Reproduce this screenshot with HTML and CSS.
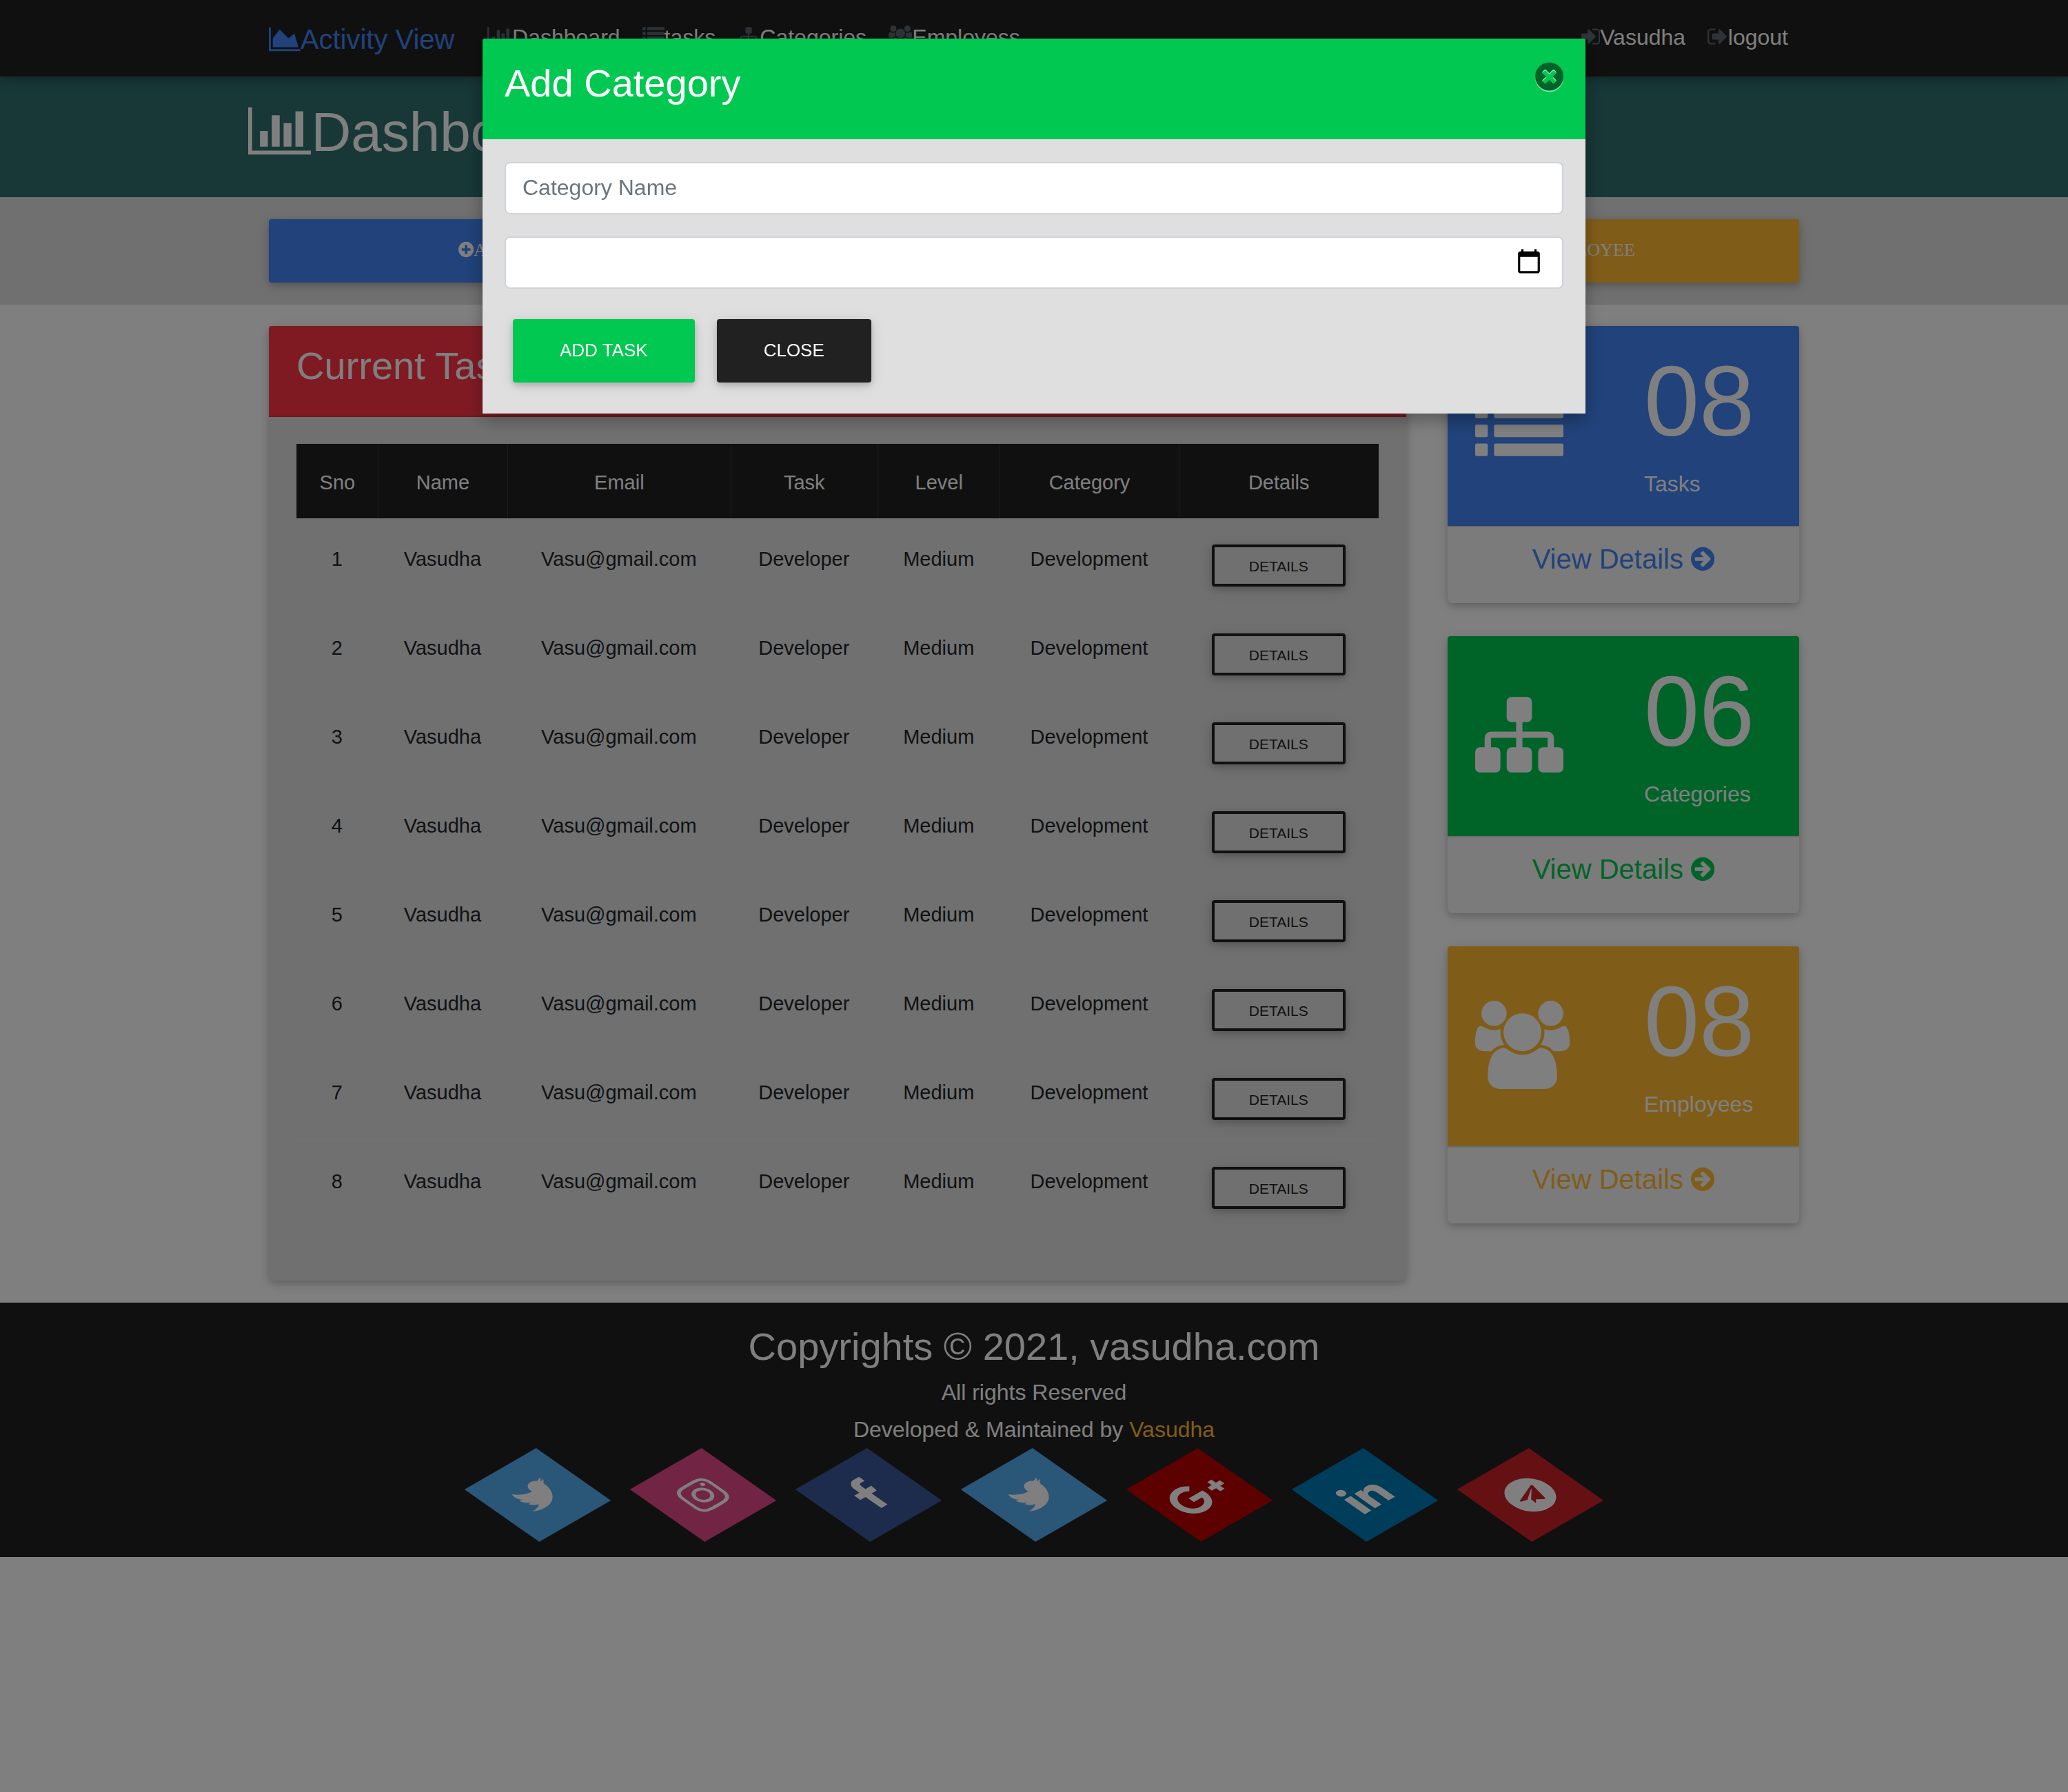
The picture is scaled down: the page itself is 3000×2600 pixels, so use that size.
FILE: index.html
```html
<!DOCTYPE html>
<html lang="en">
<head>
<meta charset="utf-8">
<meta name="viewport" content="width=device-width, initial-scale=1">
<title>Activity View</title>
<link rel="stylesheet" href="styles.css">
</head>
<body>
<svg class="sprite" aria-hidden="true">
  <symbol id="area-chart" viewBox="0 0 2048 1792"><path d="M2048 1536v128h-2048v-1536h128v1408h1920zm-384-1024l256 896h-1664v-576l448-576 576 576z"/></symbol>
  <symbol id="bar-chart" viewBox="0 0 2048 1792"><path d="M640 896v512h-256v-512h256zm384-512v1024h-256v-1024h256zm1024 1152v128h-2048v-1536h128v1408h1920zm-640-896v768h-256v-768h256zm384-384v1152h-256v-1152h256z"/></symbol>
  <symbol id="list" viewBox="0 0 1792 1792"><rect x="0" y="128" width="256" height="256" rx="32"/><rect x="384" y="128" width="1408" height="256" rx="32"/><rect x="0" y="512" width="256" height="256" rx="32"/><rect x="384" y="512" width="1408" height="256" rx="32"/><rect x="0" y="896" width="256" height="256" rx="32"/><rect x="384" y="896" width="1408" height="256" rx="32"/><rect x="0" y="1280" width="256" height="256" rx="32"/><rect x="384" y="1280" width="1408" height="256" rx="32"/></symbol>
  <symbol id="sitemap" viewBox="0 0 1792 1792"><path d="M1792 1248v320q0 40-28 68t-68 28h-320q-40 0-68-28t-28-68v-320q0-40 28-68t68-28h96v-192h-512v192h96q40 0 68 28t28 68v320q0 40-28 68t-68 28h-320q-40 0-68-28t-28-68v-320q0-40 28-68t68-28h96v-192h-512v192h96q40 0 68 28t28 68v320q0 40-28 68t-68 28h-320q-40 0-68-28t-28-68v-320q0-40 28-68t68-28h96v-192q0-52 38-90t90-38h512v-192h-96q-40 0-68-28t-28-68v-320q0-40 28-68t68-28h320q40 0 68 28t28 68v320q0 40-28 68t-68 28h-96v192h512q52 0 90 38t38 90v192h96q40 0 68 28t28 68z"/></symbol>
  <symbol id="users" viewBox="0 0 1920 1792"><path d="M593 896q-162 5-265 128h-134q-82 0-138-40.5t-56-118.5q0-353 124-353 6 0 43.5 21t97.5 42.5 119 21.5q67 0 133-23-5 37-5 66 0 139 81 256zm1071 637q0 120-73 189.5t-194 69.5h-874q-121 0-194-69.5t-73-189.5q0-53 3.5-103.5t14-109 26.5-108.5 43-97.5 62-81 85.5-53.5 111.5-20q10 0 43 21.5t73 48 107 48 135 21.5 135-21.5 107-48 73-48 43-21.5q61 0 111.5 20t85.5 53.5 62 81 43 97.5 26.5 108.5 14 109 3.5 103.5zm-1024-1277q0 106-75 181t-181 75-181-75-75-181 75-181 181-75 181 75 75 181zm704 384q0 159-112.5 271.5t-271.5 112.5-271.5-112.5-112.5-271.5 112.5-271.5 271.5-112.5 271.5 112.5 112.5 271.5zm576 225q0 78-56 118.5t-138 40.5h-134q-103-123-265-128 81-117 81-256 0-29-5-66 66 23 133 23 59 0 119-21.5t97.5-42.5 43.5-21q124 0 124 353zm-128-609q0 106-75 181t-181 75-181-75-75-181 75-181 181-75 181 75 75 181z"/></symbol>
  <symbol id="sign-in" viewBox="128 0 1536 1792"><path d="M1312 896q0 26-19 45l-544 544q-19 19-45 19t-45-19-19-45v-288h-448q-26 0-45-19t-19-45v-384q0-26 19-45t45-19h448v-288q0-26 19-45t45-19 45 19l544 544q19 19 19 45zm352-352v704q0 119-84.5 203.5t-203.5 84.5h-320q-13 0-22.5-9.5t-9.5-22.5q0-4-1-20t-.5-26.5 3-23.5 10-19.5 20.5-6.5h320q66 0 113-47t47-113v-704q0-66-47-113t-113-47h-312l-11.5-1-11.5-3-8-5.5-7-9-2-13.5q0-4-1-20t-.5-26.5 3-23.5 10-19.5 20.5-6.5h320q119 0 203.5 84.5t84.5 203.5z"/></symbol>
  <symbol id="sign-out" viewBox="64 0 1664 1792"><path d="M704 1440q0 4 1 20t.5 26.5-3 23.5-10 19.5-20.5 6.5h-320q-119 0-203.5-84.5t-84.5-203.5v-704q0-119 84.5-203.5t203.5-84.5h320q13 0 22.5 9.5t9.5 22.5q0 4 1 20t.5 26.5-3 23.5-10 19.5-20.5 6.5h-320q-66 0-113 47t-47 113v704q0 66 47 113t113 47h312l11.5 1 11.5 3 8 5.5 7 9 2 13.5zm928-544q0 26-19 45l-544 544q-19 19-45 19t-45-19-19-45v-288h-448q-26 0-45-19t-19-45v-384q0-26 19-45t45-19h448v-288q0-26 19-45t45-19 45 19l544 544q19 19 19 45z"/></symbol>
  <symbol id="plus-circle" viewBox="128 0 1536 1792"><path d="M1344 960v-128q0-26-19-45t-45-19h-256v-256q0-26-19-45t-45-19h-128q-26 0-45 19t-19 45v256h-256q-26 0-45 19t-19 45v128q0 26 19 45t45 19h256v256q0 26 19 45t45 19h128q26 0 45-19t19-45v-256h256q26 0 45-19t19-45zm320-64q0 209-103 385.5t-279.5 279.5-385.5 103-385.5-103-279.5-279.5-103-385.5 103-385.5 279.5-279.5 385.5-103 385.5 103 279.5 279.5 103 385.5z"/></symbol>
  <symbol id="arrow-circle" viewBox="128 0 1536 1792"><path d="M1413 896q0-27-18-45l-91-91-362-362q-18-18-45-18t-45 18l-91 91q-18 18-18 45t18 45l189 189h-502q-26 0-45 19t-19 45v128q0 26 19 45t45 19h502l-189 189q-19 19-19 45t19 45l91 91q18 18 45 18t45-18l362-362 91-91q18-18 18-45zm251 0q0 209-103 385.5t-279.5 279.5-385.5 103-385.5-103-279.5-279.5-103-385.5 103-385.5 279.5-279.5 385.5-103 385.5 103 279.5 279.5 103 385.5z"/></symbol>
  <symbol id="times-circle" viewBox="128 0 1536 1792"><path d="M1277 1122q0-26-19-45l-181-181 181-181q19-19 19-45 0-27-19-46l-90-90q-19-19-46-19-26 0-45 19l-181 181-181-181q-19-19-45-19-27 0-46 19l-90 90q-19 19-19 46 0 26 19 45l181 181-181 181q-19 19-19 45 0 27 19 46l90 90q19 19 46 19 26 0 45-19l181-181 181 181q19 19 45 19 27 0 46-19l90-90q19-19 19-46zm387-226q0 209-103 385.5t-279.5 279.5-385.5 103-385.5-103-279.5-279.5-103-385.5 103-385.5 279.5-279.5 385.5-103 385.5 103 279.5 279.5 103 385.5z"/></symbol>
  <symbol id="twitter" viewBox="64 0 1664 1792"><path d="M1684 408q-67 98-162 167 1 14 1 42 0 130-38 259.5t-115.5 248.5-184.5 210.5-258 146-323 54.5q-271 0-496-145 35 4 78 4 225 0 401-138-105-2-188-64.5t-114-159.5q33 5 61 5 43 0 85-11-112-23-185.5-111.5t-73.5-205.5v-4q68 38 146 41-66-44-105-115t-39-154q0-88 44-163 121 149 294.5 238.5t371.5 99.5q-8-38-8-74 0-134 94.5-228.5t228.5-94.5q140 0 236 102 109-21 205-78-37 115-142 178 93-10 186-50z"/></symbol>
  <symbol id="instagram" viewBox="128 0 1536 1792"><path d="M1152 896q0-106-75-181t-181-75-181 75-75 181 75 181 181 75 181-75 75-181zm138 0q0 164-115 279t-279 115-279-115-115-279 115-279 279-115 279 115 115 279zm108-410q0 38-27 65t-65 27-65-27-27-65 27-65 65-27 65 27 27 65zm-502-220q-7 0-76.5-.5t-105.5 0-96.5 3-103 10-71.5 18.5q-50 20-88 58t-58 88q-11 29-18.5 71.5t-10 103-3 96.5 0 105.5.5 76.5-.5 76.5 0 105.5 3 96.5 10 103 18.5 71.5q20 50 58 88t88 58q29 11 71.5 18.5t103 10 96.5 3 105.5 0 76.5-.5 76.5.5 105.5 0 96.5-3 103-10 71.5-18.5q50-20 88-58t58-88q11-29 18.5-71.5t10-103 3-96.5 0-105.5-.5-76.5.5-76.5 0-105.5-3-96.5-10-103-18.5-71.5q-20-50-58-88t-88-58q-29-11-71.5-18.5t-103-10-96.5-3-105.5 0-76.5.5zm768 630q0 229-5 317-10 208-124 322t-322 124q-88 5-317 5t-317-5q-208-10-322-124t-124-322q-5-88-5-317t5-317q10-208 124-322t322-124q88-5 317-5t317 5q208 10 322 124t124 322q5 88 5 317z"/></symbol>
  <symbol id="facebook" viewBox="384 0 1024 1792"><path d="M1343 12v264h-157q-86 0-116 36t-30 108v189h293l-39 296h-254v759h-306v-759h-255v-296h255v-218q0-186 104-288.5t277-102.5q147 0 228 12z"/></symbol>
  <symbol id="google-plus" viewBox="0 0 2304 1792"><path d="M1437 913q0 208-87 370.5t-248 254-369 91.5q-149 0-285-58t-234-156-156-234-58-285 58-285 156-234 234-156 285-58q286 0 491 192l-199 191q-117-113-292-113-123 0-227.5 62t-165.5 168.5-61 232.5 61 232.5 165.5 168.5 227.5 62q83 0 152.5-23t114.5-57.5 78.5-78.5 49-83 21.5-74h-416v-252h692q12 63 12 122zm867-122v210h-209v209h-210v-209h-209v-210h209v-209h210v209h209z"/></symbol>
  <symbol id="linkedin" viewBox="128 0 1536 1792"><path d="M477 625v991h-330v-991h330zm21-306q1 73-50.5 122t-135.5 49h-2q-82 0-132-49t-50-122q0-74 51.5-122.5t134.5-48.5 133 48.5 51 122.5zm1166 729v568h-329v-530q0-105-40.5-164.5t-126.5-59.5q-63 0-105.5 34.5t-63.5 85.5q-11 30-11 81v553h-329q2-399 2-647t-1-296l-1-48h329v144h-2q20-32 41-56t56.5-52 87-43.5 114.5-15.5q171 0 275 113.5t104 332.5z"/></symbol>
  <symbol id="telegram" viewBox="0 0 1792 1792"><path d="M1189 1307l147-693q9-44-10.5-63t-51.5-7l-864 333q-29 11-39.5 25t-2.5 26.5 32 19.5l221 69 513-323q21-14 32-6 7 5-4 15l-415 375-16 228q23 0 45-22l108-104 224 165q64 36 81-38zm603-411q0 182-71 348t-191 286-286 191-348 71-348-71-286-191-191-286-71-348 71-348 191-286 286-191 348-71 348 71 286 191 191 286 71 348z"/></symbol>
</svg>

<nav class="navbar">
  <div class="container navbar-inner">
    <a class="brand" href="#"><svg class="icon icon-chart"><use href="#area-chart"/></svg>Activity View</a>
    <ul class="nav-list">
      <li><a class="nav-link" href="#"><svg class="icon icon-chart"><use href="#bar-chart"/></svg>Dashboard</a></li>
      <li><a class="nav-link" href="#"><svg class="icon"><use href="#list"/></svg>tasks</a></li>
      <li><a class="nav-link" href="#"><svg class="icon"><use href="#sitemap"/></svg>Categories</a></li>
      <li><a class="nav-link" href="#"><svg class="icon icon-users"><use href="#users"/></svg>Employess</a></li>
    </ul>
    <ul class="nav-list nav-end">
      <li><a class="nav-link" href="#"><svg class="icon icon-round"><use href="#sign-in"/></svg>Vasudha</a></li>
      <li><a class="nav-link" href="#"><svg class="icon icon-exit"><use href="#sign-out"/></svg>logout</a></li>
    </ul>
  </div>
</nav>

<header class="page-header">
  <div class="heading-row">
    <h1 class="page-title"><svg class="icon icon-chart"><use href="#bar-chart"/></svg>Dashboard</h1>
  </div>
</header>

<section class="actions">
  <div class="container action-grid">
    <button class="btn btn-serif btn-primary" type="button"><svg class="icon icon-round"><use href="#plus-circle"/></svg>ADD TASK</button>
    <button class="btn btn-serif btn-success" type="button"><svg class="icon icon-round"><use href="#plus-circle"/></svg>ADD CATEGORY</button>
    <button class="btn btn-serif btn-warning" type="button"><svg class="icon icon-round"><use href="#plus-circle"/></svg>ADD EMPLOYEE</button>
  </div>
</section>

<main class="container main-grid">
  <section class="card">
    <h2 class="card-title">Current Tasks</h2>
    <div class="card-body">
      <table class="tasks">
        <colgroup><col class="c-sno"><col class="c-name"><col class="c-email"><col class="c-task"><col class="c-level"><col class="c-category"><col></colgroup>
        <thead>
          <tr><th scope="col">Sno</th><th scope="col">Name</th><th scope="col">Email</th><th scope="col">Task</th><th scope="col">Level</th><th scope="col">Category</th><th scope="col">Details</th></tr>
        </thead>
        <tbody>
          <tr><td>1</td><td>Vasudha</td><td>Vasu@gmail.com</td><td>Developer</td><td>Medium</td><td>Development</td><td><button class="btn-outline" type="button">DETAILS</button></td></tr>
          <tr><td>2</td><td>Vasudha</td><td>Vasu@gmail.com</td><td>Developer</td><td>Medium</td><td>Development</td><td><button class="btn-outline" type="button">DETAILS</button></td></tr>
          <tr><td>3</td><td>Vasudha</td><td>Vasu@gmail.com</td><td>Developer</td><td>Medium</td><td>Development</td><td><button class="btn-outline" type="button">DETAILS</button></td></tr>
          <tr><td>4</td><td>Vasudha</td><td>Vasu@gmail.com</td><td>Developer</td><td>Medium</td><td>Development</td><td><button class="btn-outline" type="button">DETAILS</button></td></tr>
          <tr><td>5</td><td>Vasudha</td><td>Vasu@gmail.com</td><td>Developer</td><td>Medium</td><td>Development</td><td><button class="btn-outline" type="button">DETAILS</button></td></tr>
          <tr><td>6</td><td>Vasudha</td><td>Vasu@gmail.com</td><td>Developer</td><td>Medium</td><td>Development</td><td><button class="btn-outline" type="button">DETAILS</button></td></tr>
          <tr><td>7</td><td>Vasudha</td><td>Vasu@gmail.com</td><td>Developer</td><td>Medium</td><td>Development</td><td><button class="btn-outline" type="button">DETAILS</button></td></tr>
          <tr><td>8</td><td>Vasudha</td><td>Vasu@gmail.com</td><td>Developer</td><td>Medium</td><td>Development</td><td><button class="btn-outline" type="button">DETAILS</button></td></tr>
        </tbody>
      </table>
    </div>
  </section>

  <aside class="stats">
    <section class="stat stat-primary">
      <div class="stat-body">
        <svg class="icon stat-icon"><use href="#list"/></svg>
        <div><p class="stat-number">08</p><p class="stat-label">Tasks</p></div>
      </div>
      <div class="stat-footer"><a class="stat-link" href="#">View Details <svg class="icon icon-round"><use href="#arrow-circle"/></svg></a></div>
    </section>
    <section class="stat stat-success">
      <div class="stat-body">
        <svg class="icon stat-icon"><use href="#sitemap"/></svg>
        <div><p class="stat-number">06</p><p class="stat-label">Categories</p></div>
      </div>
      <div class="stat-footer"><a class="stat-link" href="#">View Details <svg class="icon icon-round"><use href="#arrow-circle"/></svg></a></div>
    </section>
    <section class="stat stat-warning">
      <div class="stat-body">
        <svg class="icon icon-users stat-icon"><use href="#users"/></svg>
        <div><p class="stat-number">08</p><p class="stat-label">Employees</p></div>
      </div>
      <div class="stat-footer"><a class="stat-link" href="#">View Details <svg class="icon icon-round"><use href="#arrow-circle"/></svg></a></div>
    </section>
  </aside>
</main>

<footer class="footer">
  <h2 class="footer-title">Copyrights © 2021, vasudha.com</h2>
  <p class="footer-line">All rights Reserved</p>
  <p class="footer-line">Developed &amp; Maintained by <a class="footer-link" href="#">Vasudha</a></p>
  <ul class="social">
    <li><a class="social-link twitter" href="#" aria-label="Twitter"><svg class="icon icon-exit"><use href="#twitter"/></svg></a></li>
    <li><a class="social-link instagram" href="#" aria-label="Instagram"><svg class="icon icon-round"><use href="#instagram"/></svg></a></li>
    <li><a class="social-link facebook" href="#" aria-label="Facebook"><svg class="icon"><use href="#facebook"/></svg></a></li>
    <li><a class="social-link twitter" href="#" aria-label="Twitter"><svg class="icon icon-exit"><use href="#twitter"/></svg></a></li>
    <li><a class="social-link google" href="#" aria-label="Google Plus"><svg class="icon icon-google"><use href="#google-plus"/></svg></a></li>
    <li><a class="social-link linkedin" href="#" aria-label="LinkedIn"><svg class="icon icon-round"><use href="#linkedin"/></svg></a></li>
    <li><a class="social-link telegram" href="#" aria-label="Telegram"><svg class="icon"><use href="#telegram"/></svg></a></li>
  </ul>
</footer>

<div class="backdrop">
  <div class="modal" role="dialog" aria-modal="true" aria-labelledby="modal-title">
    <div class="modal-header">
      <h3 class="modal-title" id="modal-title">Add Category</h3>
      <button class="modal-close" type="button" aria-label="Close"><svg class="icon icon-round"><use href="#times-circle"/></svg></button>
    </div>
    <form class="modal-body">
      <input class="field" type="text" placeholder="Category Name" aria-label="Category Name">
      <input class="field field-date" type="date" aria-label="Date">
      <div class="modal-actions">
        <button class="btn btn-success" type="button">ADD TASK</button>
        <button class="btn btn-dark" type="button">CLOSE</button>
      </div>
    </form>
  </div>
</div>
</body>
</html>
```

FILE: styles.css
```css
* { box-sizing: border-box; }

:root {
  --primary: #4285f4;
  --success: #00c851;
  --warning: #ffbb33;
  --danger: #ff3547;
  --dark: #212121;
  --grey: #e0e0e0;
  --raised: 0 4px 10px rgba(0, 0, 0, .16), 0 4px 20px rgba(0, 0, 0, .12);
}

body {
  margin: 0;
  background: #fff;
  color: #212529;
  font-family: "Liberation Sans", Arial, sans-serif;
  font-size: 32px;
  line-height: 48px;
}

h1, h2, h3, p, ul { margin: 0; padding: 0; font-weight: 400; }
ul { list-style: none; }
a { text-decoration: none; }
button, input { font-family: inherit; }

.sprite { display: none; }

/* Icons share one em box; the variants only widen it. */
.icon {
  display: inline-block;
  width: 1em;
  height: 1em;
  fill: currentColor;
  vertical-align: -.143em;
}
.icon-chart { width: 1.143em; }
.icon-users { width: 1.071em; }
.icon-round { width: .857em; }
.icon-exit { width: .929em; }
.icon-google { width: 1.286em; }

.container {
  width: 100%;
  max-width: 2280px;
  margin: 0 auto;
  padding: 0 30px;
}

/* Navbar */
.navbar {
  position: relative;
  background: var(--dark);
  box-shadow: var(--raised);
  padding: 16px 0;
}
.navbar-inner { display: flex; align-items: center; }
.brand {
  margin-right: 31px;
  padding: 12px 0 8px;
  color: var(--primary);
  font-size: 40px;
  line-height: 59px;
}
.nav-list { display: flex; }
.nav-end { margin-left: auto; }
.nav-link {
  display: block;
  padding: 0 16px 4px;
  color: #fff;
}
.nav-link .icon { color: #5c666f; }

/* Page heading */
.page-header { background: #306e6e; padding: 33px 0 46px; }
.heading-row { max-width: 2280px; margin: 0 auto; }
.page-title { color: #fff; font-size: 80px; line-height: 96px; }

/* Buttons */
.btn {
  padding: 26px 68px 28px;
  border: 0;
  border-radius: 4px;
  color: #fff;
  font-size: 26px;
  line-height: 38px;
  box-shadow: var(--raised);
}
.btn-serif { font-family: "Liberation Serif", "Times New Roman", serif; }
.btn-primary { background: var(--primary); }
.btn-success { background: var(--success); }
.btn-warning { background: var(--warning); }
.btn-dark { background: var(--dark); }

.actions { background: var(--grey); padding: 32px 0; }
.action-grid { display: grid; grid-template-columns: repeat(3, 1fr); gap: 60px; }

/* Main */
.main-grid {
  display: grid;
  grid-template-columns: 1fr 510px;
  gap: 60px;
  align-items: start;
  padding-top: 31px;
  padding-bottom: 32px;
}
.card {
  overflow: hidden;
  background: var(--grey);
}
.card, .stat { border-radius: 4px 4px 8px 8px; box-shadow: var(--raised); }
.card-title {
  padding: 24px 40px 39px;
  border-bottom: 2px solid rgba(0, 0, 0, .125);
  background: var(--danger);
  color: #fff;
  font-size: 56px;
  line-height: 67px;
}
.card-body { padding: 39px 40px 74px; }

.tasks {
  width: 100%;
  table-layout: fixed;
  border-collapse: separate;
  border-spacing: 0;
  font-size: 29px;
  line-height: 43px;
  text-align: center;
}
.c-sno { width: 7.5%; }
.c-name { width: 12%; }
.c-email { width: 20.6%; }
.c-task { width: 13.6%; }
.c-level { width: 11.3%; }
.c-category { width: 16.5%; }
.tasks th {
  padding: 35px 0 30px;
  border-left: 1px solid #32383e;
  background: var(--dark);
  color: #fff;
  font-weight: 400;
}
.tasks td {
  padding: 38px 0 28px;
  border-bottom: 2px solid #dee2e6;
  vertical-align: top;
}
.btn-outline {
  display: block;
  margin: 0 auto;
  padding: 12px 50px 10px;
  border: 4px solid var(--dark);
  border-radius: 4px;
  background: transparent;
  color: var(--dark);
  font-size: 21px;
  line-height: 31px;
  box-shadow: var(--raised);
}

/* Stat cards */
.stats { display: grid; gap: 48px; }
.stat { overflow: hidden; background: #fff; }
.stat-primary { --tone: var(--primary); }
.stat-success { --tone: var(--success); }
.stat-warning { --tone: var(--warning); }
.stat-body {
  display: grid;
  grid-template-columns: 1fr 1fr;
  gap: 60px;
  align-items: start;
  padding: 23px 40px 37px;
  background: var(--tone);
  color: #fff;
}
.stat-icon { margin-top: 56px; font-size: 128px; }
.stat-number { font-size: 144px; line-height: 173px; }
.stat-label { margin-top: 9px; }
.stat-footer {
  padding: 22px 40px 40px;
  border-top: 2px solid rgba(0, 0, 0, .125);
  background: #f7f7f7;
  text-align: center;
}
.stat-link { display: block; color: var(--tone); font-size: 40px; line-height: 48px; }

/* Footer */
.footer { padding: 30px 32px; background: var(--dark); color: #fff; text-align: center; }
.footer-title { margin-bottom: 6px; font-size: 56px; line-height: 67px; }
.footer-line { line-height: 54px; }
.footer-link { color: var(--warning); }
.social { display: flex; justify-content: center; gap: 120px; margin-top: 8px; }
.social-link {
  display: flex;
  align-items: center;
  justify-content: center;
  width: 120px;
  height: 120px;
  color: #fff;
  font-size: 60px;
  transform: rotate(-30deg) skewX(25deg);
}
.twitter { background: #55acee; }
.instagram { background: #e4498a; }
.facebook { background: #3b5999; }
.google { background: #bb0000; }
.linkedin { background: #007bb5; }
.telegram { background: #cb2027; }

/* Modal */
.backdrop {
  position: fixed;
  inset: 0;
  padding: 56px;
  background: rgba(0, 0, 0, .5);
}
.modal {
  max-width: 1600px;
  margin: 0 auto;
  border-radius: 4px 4px 0 0;
  background: #dfdfdf;
  box-shadow: 0 10px 22px rgba(0, 0, 0, .18), 0 8px 30px rgba(0, 0, 0, .15);
}
.modal-header {
  display: flex;
  align-items: flex-start;
  justify-content: space-between;
  padding: 31px 32px 48px;
  border-radius: 4px 4px 0 0;
  background: var(--success);
  color: #fff;
}
.modal-title { font-size: 56px; line-height: 67px; }
.modal-close {
  padding: 0;
  border: 0;
  background: none;
  color: #000;
  font-size: 48px;
  line-height: 48px;
  opacity: .5;
}
.modal-close .icon { display: block; filter: drop-shadow(0 2px 0 #fff); }
.modal-body { display: grid; gap: 32px; padding: 33px 32px; }
.field {
  width: 100%;
  height: 76px;
  padding: 11px 24px 13px;
  border: 2px solid #ced4da;
  border-radius: 8px;
  background: #fff;
  color: #495057;
  font-size: 32px;
  line-height: 48px;
}
.field::placeholder { color: #6c757d; }
.field-date::-webkit-datetime-edit { color: transparent; }
.field-date::-webkit-calendar-picker-indicator { width: 40px; height: 40px; padding: 4px; }
.modal-actions { display: flex; gap: 32px; padding: 12px; }
```
